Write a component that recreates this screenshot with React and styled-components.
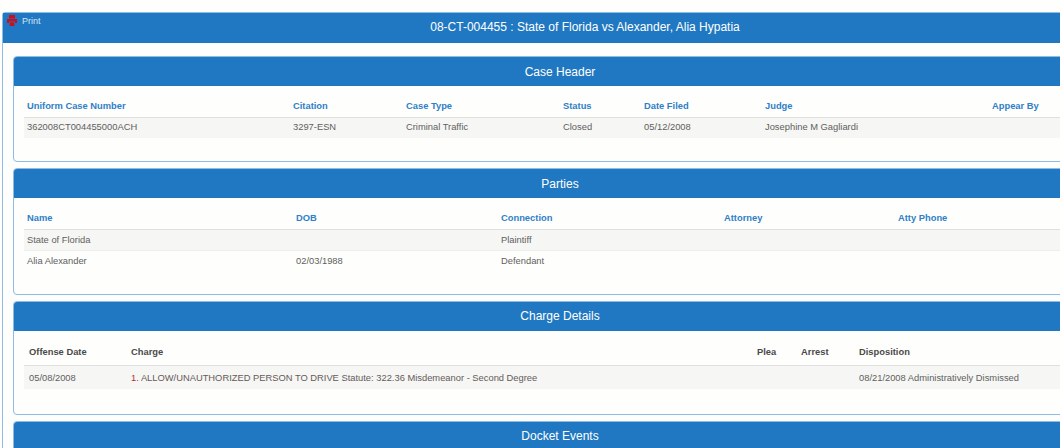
import React from 'react';
import styled, { createGlobalStyle } from 'styled-components';

const GlobalStyle = createGlobalStyle`
  html, body {
    margin: 0;
    height: 448px;
    overflow: hidden;
    background: #fefefc;
    font-family: "Liberation Sans", Arial, sans-serif;
  }
`;

const Page = styled.div`
  width: 1060px;
  height: 448px;
  overflow: hidden;
  padding: 12px 0 0 2px;
  box-sizing: border-box;
`;

const MainPanel = styled.div`
  width: 1166px;
  box-sizing: border-box;
  border: 1px solid #8dbce4;
  border-radius: 3px 3px 0 0;
`;

const MainHeader = styled.div`
  position: relative;
  height: 30px;
  background: #1f78c1;
  color: #fff;
  font-size: 12px;
  line-height: 29px;
  text-align: center;
`;

const PrintLink = styled.a`
  position: absolute;
  left: 4px;
  top: 2px;
  display: flex;
  align-items: flex-start;
  gap: 5px;
  font-size: 9px;
  line-height: 11px;
  color: #d5e6f5;
`;

const PrintLabel = styled.span`
  margin-top: 1px;
`;

const PrintIcon = styled.svg`
  width: 10px;
  height: 11px;
  fill: #c8101e;
`;

const MainBody = styled.div`
  display: flex;
  flex-direction: column;
  gap: 6px;
  padding: 13px 0 0 10px;
`;

const Card = styled.section`
  width: 1094px;
  height: ${(p) => p.$height}px;
  box-sizing: border-box;
  border: 1px solid #8dbce4;
  border-radius: 4px;
  overflow: hidden;
`;

const CardHeader = styled.h2`
  margin: 0;
  height: 29px;
  background: #1f78c1;
  color: #fff;
  font-size: 12px;
  font-weight: 400;
  line-height: ${(p) => (p.$tight ? 28 : 30)}px;
  text-align: center;
`;

const CardBody = styled.div`
  padding: 9px 0 0 10px;
`;

const Table = styled.table`
  width: 1070px;
  table-layout: fixed;
  border-collapse: collapse;
  font-size: 9.35px;
`;

const Th = styled.th`
  box-sizing: border-box;
  height: ${(p) => p.$height}px;
  padding: ${(p) => p.$drop || 0}px 0 ${(p) => p.$lift || 0}px ${(p) => p.$pad}px;
  border-bottom: 1px solid #e0e0de;
  color: ${(p) => (p.$dark ? '#4a4a4a' : '#2f80c8')};
  font-weight: 700;
  text-align: left;
  white-space: nowrap;
`;

const Row = styled.tr`
  background: ${(p) => (p.$plain ? 'transparent' : '#f6f6f4')};
  border-bottom: ${(p) => (p.$line ? '1px solid #ededeb' : 'none')};
`;

const Td = styled.td`
  box-sizing: border-box;
  height: ${(p) => p.$height}px;
  padding: ${(p) => p.$drop || 0}px 0 ${(p) => p.$lift || 0}px ${(p) => p.$pad}px;
  color: #5f5f5f;
  white-space: nowrap;
`;

const ChargeText = styled.span`
  color: #655a5a;
`;

const ChargeNo = styled.span`
  color: #b3312c;
`;

const caseCols = [266, 113, 157, 81, 121, 227, 105];
const caseHeads = ['Uniform Case Number', 'Citation', 'Case Type', 'Status', 'Date Filed', 'Judge', 'Appear By'];
const caseRow = ['362008CT004455000ACH', '3297-ESN', 'Criminal Traffic', 'Closed', '05/12/2008', 'Josephine M Gagliardi', ''];

const partyCols = [269, 205, 223, 174, 199];
const partyHeads = ['Name', 'DOB', 'Connection', 'Attorney', 'Atty Phone'];
const partyRows = [
  ['State of Florida', '', 'Plaintiff', '', ''],
  ['Alia Alexander', '02/03/1988', 'Defendant', '', ''],
];

const chargeCols = [102, 626, 44, 58, 240];
const chargeHeads = ['Offense Date', 'Charge', 'Plea', 'Arrest', 'Disposition'];

const Cols = ({ widths }) => (
  <colgroup>
    {widths.map((w, i) => (
      <col key={i} style={{ width: w }} />
    ))}
  </colgroup>
);

export default function App() {
  return (
    <Page>
      <GlobalStyle />
      <MainPanel>
        <MainHeader>
          <PrintLink>
            <PrintIcon viewBox="0 0 10 11">
              <path d="M2 0h6v3.5H2z" />
              <path d="M0 4h10v4H8V6.5H2V8H0z" />
              <path d="M2.7 7.3h4.6V11H2.7z" />
            </PrintIcon>
            <PrintLabel>Print</PrintLabel>
          </PrintLink>
          08-CT-004455 : State of Florida vs Alexander, Alia Hypatia
        </MainHeader>
        <MainBody>
          <Card $height={106}>
            <CardHeader>Case Header</CardHeader>
            <CardBody>
              <Table>
                <Cols widths={caseCols} />
                <thead>
                  <tr>
                    {caseHeads.map((h) => (
                      <Th key={h} $height={22} $pad={3}>{h}</Th>
                    ))}
                  </tr>
                </thead>
                <tbody>
                  <Row>
                    {caseRow.map((c, i) => (
                      <Td key={i} $height={21} $pad={3} $lift={1}>{c}</Td>
                    ))}
                  </Row>
                </tbody>
              </Table>
            </CardBody>
          </Card>
          <Card $height={127}>
            <CardHeader>Parties</CardHeader>
            <CardBody>
              <Table>
                <Cols widths={partyCols} />
                <thead>
                  <tr>
                    {partyHeads.map((h) => (
                      <Th key={h} $height={22} $pad={3}>{h}</Th>
                    ))}
                  </tr>
                </thead>
                <tbody>
                  {partyRows.map((r, n) => (
                    <Row key={n} $plain={n === 1} $line={n === 0}>
                      {r.map((c, i) => (
                        <Td key={i} $height={21} $pad={3} $drop={n}>{c}</Td>
                      ))}
                    </Row>
                  ))}
                </tbody>
              </Table>
            </CardBody>
          </Card>
          <Card $height={114}>
            <CardHeader $tight>Charge Details</CardHeader>
            <CardBody>
              <Table>
                <Cols widths={chargeCols} />
                <thead>
                  <tr>
                    {chargeHeads.map((h) => (
                      <Th key={h} $height={25} $pad={5} $lift={1} $dark>{h}</Th>
                    ))}
                  </tr>
                </thead>
                <tbody>
                  <Row>
                    <Td $height={24} $pad={5} $drop={1}>05/08/2008</Td>
                    <Td $height={24} $pad={5} $drop={1}>
                      <ChargeNo>1. </ChargeNo>
                      <ChargeText>ALLOW/UNAUTHORIZED PERSON TO DRIVE Statute: 322.36 Misdemeanor - Second Degree</ChargeText>
                    </Td>
                    <Td $height={24} $pad={5} />
                    <Td $height={24} $pad={5} />
                    <Td $height={24} $pad={5} $drop={1}>08/21/2008 Administratively Dismissed</Td>
                  </Row>
                </tbody>
              </Table>
            </CardBody>
          </Card>
          <Card $height={60}>
            <CardHeader $tight>Docket Events</CardHeader>
          </Card>
        </MainBody>
      </MainPanel>
    </Page>
  );
}
